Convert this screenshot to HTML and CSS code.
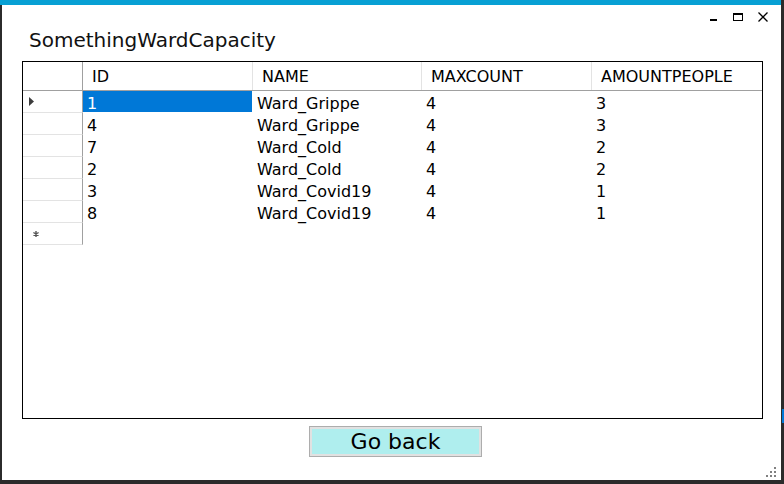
FILE: index.html
```html
<!DOCTYPE html>
<html>
<head>
<meta charset="utf-8">
<link rel="stylesheet" href="styles.css">
</head>
<body>
<div class="frame">
  <div class="window">
    <div class="titlebar">
      <svg class="ctl ctl-min" width="10" height="10" viewBox="0 0 10 10"><rect x="1" y="7" width="7" height="2" fill="#000"/></svg>
      <svg class="ctl ctl-max" width="10" height="10" viewBox="0 0 10 10"><rect x="0.5" y="1.5" width="9" height="7" fill="none" stroke="#000" stroke-width="1"/><rect x="0" y="1" width="10" height="2" fill="#000"/></svg>
      <svg class="ctl ctl-close" width="10" height="10" viewBox="0 0 10 10"><path d="M0.5 0.5 L9.5 9.5 M9.5 0.5 L0.5 9.5" stroke="#000" stroke-width="1.3" fill="none"/></svg>
    </div>
    <div class="caption">SomethingWardCapacity</div>
    <div class="grid">
      <div class="row head">
        <div class="rh"></div>
        <div class="hc">ID</div>
        <div class="hc">NAME</div>
        <div class="hc">MAXCOUNT</div>
        <div class="hc last">AMOUNTPEOPLE</div>
      </div>
      <div class="row">
        <div class="rh"><svg width="6" height="9" viewBox="0 0 6 9"><path d="M0 0 L5 4.5 L0 9 Z" fill="#3c3c3c"/></svg></div>
        <div class="dc sel">1</div>
        <div class="dc">Ward_Grippe</div>
        <div class="dc">4</div>
        <div class="dc">3</div>
      </div>
      <div class="row">
        <div class="rh"></div>
        <div class="dc">4</div>
        <div class="dc">Ward_Grippe</div>
        <div class="dc">4</div>
        <div class="dc">3</div>
      </div>
      <div class="row">
        <div class="rh"></div>
        <div class="dc">7</div>
        <div class="dc">Ward_Cold</div>
        <div class="dc">4</div>
        <div class="dc">2</div>
      </div>
      <div class="row">
        <div class="rh"></div>
        <div class="dc">2</div>
        <div class="dc">Ward_Cold</div>
        <div class="dc">4</div>
        <div class="dc">2</div>
      </div>
      <div class="row">
        <div class="rh"></div>
        <div class="dc">3</div>
        <div class="dc">Ward_Covid19</div>
        <div class="dc">4</div>
        <div class="dc">1</div>
      </div>
      <div class="row">
        <div class="rh"></div>
        <div class="dc">8</div>
        <div class="dc">Ward_Covid19</div>
        <div class="dc">4</div>
        <div class="dc">1</div>
      </div>
      <div class="row">
        <div class="rh newrow"><svg width="6" height="6" viewBox="0 0 6 6"><path d="M3 0 V6 M0.4 1.5 L5.6 4.5 M5.6 1.5 L0.4 4.5" stroke="#555" stroke-width="1.4" fill="none"/></svg></div>
      </div>
    </div>
    <div class="actions">
      <button class="btn">Go back</button>
    </div>
    <svg class="grip" width="11" height="11" viewBox="0 0 11 11">
      <rect x="8" y="0" width="2" height="2" fill="#808080"/>
      <rect x="4" y="4" width="2" height="2" fill="#808080"/>
      <rect x="8" y="4" width="2" height="2" fill="#808080"/>
      <rect x="0" y="8" width="2" height="2" fill="#808080"/>
      <rect x="4" y="8" width="2" height="2" fill="#808080"/>
      <rect x="8" y="8" width="2" height="2" fill="#808080"/>
    </svg>
  </div>
</div>
</body>
</html>
```

FILE: styles.css
```css
html, body {
  margin: 0;
  padding: 0;
  background: #2b2b2b;
}

.frame {
  width: 784px;
  height: 484px;
  box-sizing: border-box;
  padding: 0 3px 4px 0;
  background: linear-gradient(to bottom, transparent 409px, #0078d7 409px, #0078d7 423px, transparent 423px) right top / 2px 100% no-repeat, #2b2b2b;
}

.window {
  position: relative;
  width: 781px;
  height: 480px;
  box-sizing: border-box;
  background: #ffffff;
  border-top: 5px solid #07a0d4;
  box-shadow: inset 2px 0 0 #2b2b2b;
  padding-left: 22px;
  display: flex;
  flex-direction: column;
  font-family: "DejaVu Sans", sans-serif;
  color: #000;
}

.titlebar {
  height: 23px;
  display: flex;
  align-items: center;
  justify-content: flex-end;
  padding-right: 13px;
}

.ctl {
  display: block;
}

.ctl-min {
  margin-right: 14px;
  margin-top: 1px;
}

.ctl-max {
  margin-right: 15px;
  margin-top: 1px;
}

.ctl-close {
  margin-top: 1px;
}

.caption {
  height: 24px;
  line-height: 24px;
  font-size: 20px;
  padding-left: 7px;
  margin-bottom: 9px;
  color: #111;
}

.grid {
  width: 741px;
  height: 358px;
  box-sizing: border-box;
  border: 1px solid #000;
  display: flex;
  flex-direction: column;
  font-size: 16px;
  overflow: hidden;
}

.row {
  display: grid;
  grid-template-columns: 60px 170px 169px 170px 170px;
  height: 22px;
}

.row.head {
  height: 29px;
  border-bottom: 1px solid #a0a0a0;
  box-sizing: border-box;
}

.rh {
  box-sizing: border-box;
  border-right: 1px solid #a0a0a0;
  border-bottom: 1px solid #e3e3e3;
  display: flex;
  align-items: center;
  padding-left: 6px;
}

.head .rh {
  border-bottom: none;
}

.rh.newrow {
  padding-left: 10px;
  padding-top: 1px;
}

.hc {
  box-sizing: border-box;
  border-right: 1px solid #e3e3e3;
  padding: 5px 0 0 9px;
  line-height: 19px;
  white-space: nowrap;
}

.hc.last {
  border-right: none;
}

.dc {
  box-sizing: border-box;
  height: 21px;
  border-right: 1px solid transparent;
  padding: 4px 0 0 4px;
  line-height: 17px;
  white-space: nowrap;
}

.dc.sel {
  background: #0078d7;
  background-clip: padding-box;
  color: #fff;
}

.actions {
  display: flex;
  margin-top: 7px;
}

.btn {
  margin-left: 287px;
  width: 173px;
  height: 31px;
  box-sizing: border-box;
  border: 1px solid #adadad;
  box-shadow: inset 0 0 0 2px #e1e1e1;
  background: #afeeee;
  font-family: "DejaVu Sans", sans-serif;
  font-size: 22px;
  line-height: 27px;
  padding: 0;
  color: #000;
}

.grip {
  position: absolute;
  right: 4px;
  bottom: 2px;
}
```
